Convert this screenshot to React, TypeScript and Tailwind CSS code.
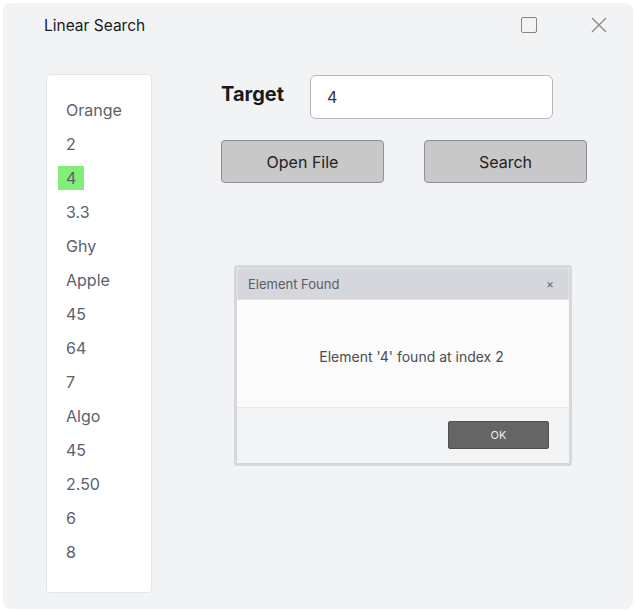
const ITEMS = ['Orange', '2', '4', '3.3', 'Ghy', 'Apple', '45', '64', '7', 'Algo', '45', '2.50', '6', '8']
const FOUND = 2

export default function App() {
  return (
    <div className="w-[636px] h-[612px] bg-white p-[3px]" style={{ fontFamily: 'Inter, "Noto Sans", sans-serif' }}>
      <div className="w-[630px] h-[606px] rounded-lg bg-[#f2f3f5] flex flex-col">
        {/* Title bar */}
        <div className="h-[44px] flex items-center pl-[41px] pr-[26px]">
          <span className="text-[15.5px] text-[#1a1a1a] mt-[2px]">Linear Search</span>
          <div className="ml-auto flex items-center gap-[54px]">
            <div className="w-[16px] h-[16px] border-[1.5px] border-[#858585] rounded-[2px]" />
            <svg width="16" height="16" viewBox="0 0 16 16" fill="none" stroke="#8a8a8a" strokeWidth="1.4">
              <path d="M1 1 L15 15 M15 1 L1 15" />
            </svg>
          </div>
        </div>

        <div className="flex mt-[27px] pl-[43px]">
          {/* List */}
          <div className="w-[106px] h-[519px] bg-white rounded border border-[#e4e6ea] pt-[18px] pl-[19px]">
            {ITEMS.map((item, i) => (
              <div key={i} className="h-[34px] flex items-center">
                <span
                  className={
                    i === FOUND
                      ? 'bg-[#80ee78] -ml-2 px-2 h-[24px] flex items-center text-[16px] text-[#5b5f6b]'
                      : 'text-[16px] text-[#5b5f6b]'
                  }
                >
                  {item}
                </span>
              </div>
            ))}
          </div>

          {/* Right column */}
          <div className="ml-[69px] pt-px">
            <div className="flex items-center">
              <span className="w-[89px] text-[20px] font-bold text-[#1a1a1a] -mt-[6px]">Target</span>
              <div className="w-[243px] h-[44px] bg-white border border-[#b3b6bd] rounded-md flex items-center pl-[16px] text-[16px] text-[#333]">
                4
              </div>
            </div>
            <div className="flex gap-[40px] mt-[21px]">
              <button className="w-[163px] h-[43px] bg-[#c8c8c8] border border-[#8c909a] rounded text-[16px] text-[#222]">
                Open File
              </button>
              <button className="w-[163px] h-[43px] bg-[#c8c8c8] border border-[#8c909a] rounded text-[16px] text-[#222]">
                Search
              </button>
            </div>

            {/* Dialog */}
            <div className="ml-[13px] mt-[82px] w-[338px] h-[201px] border-[3px] border-[#d6d8dd] rounded-[3px] flex flex-col bg-[#f3f4f6]">
              <div className="h-[32px] bg-[#d5d7dd] rounded-t-[3px] border border-[#dfe1e5] flex items-center pl-[10px] pr-[14px]">
                <span className="text-[13px] text-[#5a5d63] mt-px">Element Found</span>
                <span className="ml-auto text-[12px] text-[#6a6d73]">×</span>
              </div>
              <div className="h-[108px] bg-[#fbfbfb] border-b border-[#e8e9ec] flex items-center justify-center pl-[17px] pt-[6px]">
                <span className="text-[14px] text-[#4a4d52]">Element '4' found at index 2</span>
              </div>
              <div className="flex-1 flex justify-end pr-[20px] pt-[13px]">
                <button className="w-[101px] h-[28px] bg-[#646564] border border-[#4f504f] rounded-[2px] text-[11px] text-[#eeeeee]">
                  OK
                </button>
              </div>
            </div>
          </div>
        </div>
      </div>
    </div>
  )
}
